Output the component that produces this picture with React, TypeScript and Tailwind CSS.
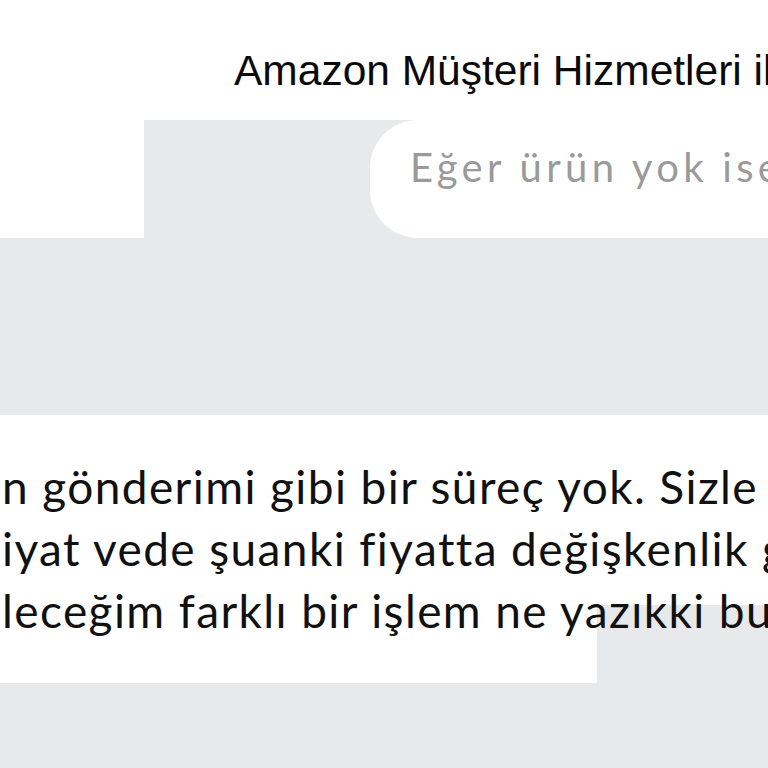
import React from "react";

export default function App() {
  return (
    <div className="w-[768px] h-[768px] overflow-hidden bg-white flex flex-col">
      {/* title row */}
      <div className="h-[120px] shrink-0 bg-white pl-[234px] pt-[50px] whitespace-nowrap overflow-hidden">
        <span className="text-[42.5px] leading-none text-[#0a0a0a] [font-family:'Liberation_Sans',Arial,sans-serif]">
          Amazon Müşteri Hizmetleri il
        </span>
      </div>

      {/* incoming bubble row */}
      <div className="h-[118px] shrink-0 flex">
        <div className="w-[144px] shrink-0 bg-white" />
        <div className="flex-1 bg-[#e7e9eb] pl-[226px] flex min-w-0">
          <div className="flex-1 min-w-0 bg-white rounded-l-[48px] pl-[40px] pt-[18px] whitespace-nowrap overflow-hidden">
            <span className="text-[40px] leading-[58px] tracking-[4.3px] text-[#9a9a9a] [font-variant-ligatures:none] [font-family:Lato,'Noto_Sans',sans-serif]">
              Eğer ürün yok ise
            </span>
          </div>
        </div>
      </div>

      {/* gray gap */}
      <div className="h-[177px] shrink-0 bg-[#e7e9eb]" />

      {/* outgoing bubble */}
      <div className="h-[268px] shrink-0 relative bg-white">
        <div className="absolute left-[597px] top-[190px] right-0 bottom-0 bg-[#e7e9eb]" />
        <div className="relative pl-[2px] pt-[41px] whitespace-nowrap overflow-hidden text-[46px] leading-[62px] tracking-[1.4px] text-[#111111] [font-variant-ligatures:none] [font-family:Lato,'Noto_Sans',sans-serif]">
          <div>n gönderimi gibi bir süreç yok. Sizle</div>
          <div>iyat vede şuanki fiyatta değişkenlik g</div>
          <div>leceğim farklı bir işlem ne yazıkki bu</div>
        </div>
      </div>

      <div className="flex-1 bg-[#e7e9eb]" />
    </div>
  );
}
